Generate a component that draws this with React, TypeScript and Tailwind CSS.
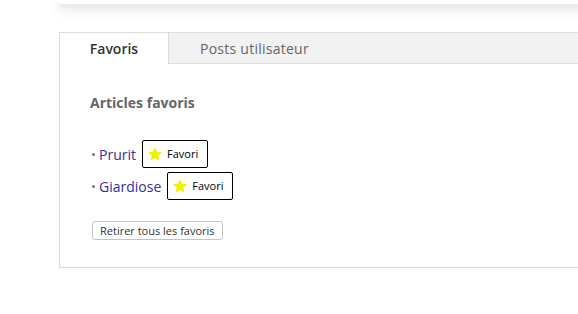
const favoris = ['Prurit', 'Giardiose'];

function Star() {
  return (
    <svg width="16" height="16" viewBox="0 0 24 24" className="shrink-0 -ml-[1px]">
      <polygon
        points="12,1.5 15.1,8.6 22.8,9.3 17,14.4 18.7,22 12,18 5.3,22 7,14.4 1.2,9.3 8.9,8.6"
        fill="#f2f200"
      />
    </svg>
  );
}

export default function App() {
  return (
    <div className="w-[578px] h-[314px] overflow-hidden bg-white font-['Open_Sans',sans-serif]">
      {/* bas de la carte du dessus */}
      <div className="ml-[57px] w-[560px] h-[4px] bg-white rounded-bl-[8px] shadow-[0_3px_6px_rgba(0,0,0,0.12),0_6px_16px_rgba(0,0,0,0.14)]" />

      <div className="ml-[59px] mt-[28px] w-[560px] border border-[#dcdcdc]">
        <div className="flex h-[31px]">
          <div className="w-[109px] flex items-center justify-center text-[14px] font-semibold text-[#333] bg-white border-r border-[#dcdcdc]">
            Favoris
          </div>
          <div className="flex-1 flex items-center pl-[31px] text-[14px] tracking-[0.25px] text-[#666] bg-[#f2f2f2] border-b border-[#dcdcdc]">
            Posts utilisateur
          </div>
        </div>

        <div className="px-[30px] pt-[29px] pb-[26px]">
          <h3 className="text-[14px] font-bold text-[#666] leading-[19px]">Articles favoris</h3>

          <ul className="mt-[28px]">
            {favoris.map((name) => (
              <li key={name} className="flex items-center h-[28px] mb-[4px]">
                <span className="w-[3px] h-[3px] rounded-full bg-[#777] ml-[2px] mr-[4px] mt-[1px]" />
                <a className="text-[14px] text-[#362f9c]">{name}</a>
                <button className="ml-[6px] h-[28px] pl-[5px] pr-[9px] flex items-center gap-[4px] border border-black rounded-[2px] bg-white text-[11px] text-black">
                  <Star />
                  <span>Favori</span>
                </button>
              </li>
            ))}
          </ul>

          <button className="mt-[17px] ml-[2px] h-[19px] px-[7px] border border-[#c4c4c4] rounded-[3px] bg-white text-[11px] text-[#333] leading-none">
            Retirer tous les favoris
          </button>
        </div>
      </div>
    </div>
  );
}
